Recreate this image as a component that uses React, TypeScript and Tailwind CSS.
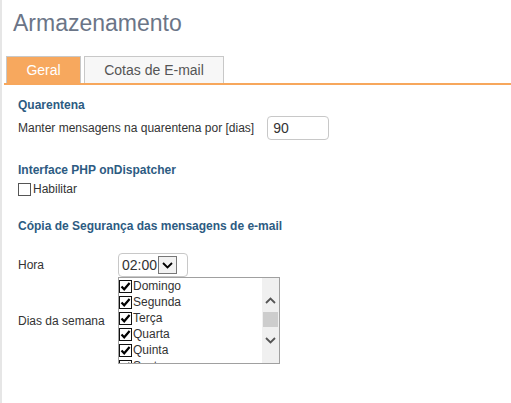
const days = ["Domingo", "Segunda", "Terça", "Quarta", "Quinta", "Sexta", "Sábado"];

function CheckMark() {
  return (
    <svg width="11" height="11" viewBox="0 0 11 11" className="block">
      <path d="M1.5 5.5 L4.2 8.3 L9.6 2" fill="none" stroke="#000" strokeWidth="2.2" />
    </svg>
  );
}

function DayList() {
  return (
    <div className="flex h-[87px] w-[162px] overflow-hidden border border-[#a0a0a0] bg-white">
      <div className="flex-1 overflow-hidden">
        {days.map((d) => (
          <div key={d} className="flex h-4 items-center text-[12px] leading-4 text-[#333]">
            <span className="flex h-[13px] w-[13px] items-center justify-center border border-[#111] bg-white">
              <CheckMark />
            </span>
            <span className="ml-px">{d}</span>
          </div>
        ))}
      </div>
      <div className="flex w-[17px] flex-col items-center bg-[#f0f0f0] pt-[19px]">
        <svg width="11" height="7" viewBox="0 0 11 7" className="block">
          <path d="M1 6 L5.5 1.5 L10 6" fill="none" stroke="#555" strokeWidth="1.8" />
        </svg>
        <div className="mt-[8px] h-[15px] w-[15px] bg-[#cdcdcd]" />
        <svg width="11" height="7" viewBox="0 0 11 7" className="mt-[10px] block">
          <path d="M1 1 L5.5 5.5 L10 1" fill="none" stroke="#555" strokeWidth="1.8" />
        </svg>
      </div>
    </div>
  );
}

export default function App() {
  return (
    <div className="min-h-[403px] border-l-2 border-[#e6e6e6] bg-white font-['Liberation_Sans',Arial,sans-serif]">
      <h1 className="pl-[11px] pt-[8px] text-[23px] leading-[30px] font-normal text-[#6b7587]">
        Armazenamento
      </h1>
      <div className="ml-[2px] mt-[18px] flex gap-[3px] border-b-2 border-[#f7a75c] pl-[2px]">
        <div className="flex h-[27px] w-[75px] items-center justify-center border border-b-0 border-[#c8c8c8] bg-[#f7a85e] text-[14px] text-white">
          Geral
        </div>
        <div className="flex h-[27px] w-[140px] items-center justify-center border border-b-0 border-[#c8c8c8] bg-[#f7f7f7] text-[14px] text-[#555]">
          Cotas de E-mail
        </div>
      </div>

      <div className="pl-4 pt-[13px] text-[12px] text-[#333]">
        <div className="font-bold leading-[15px] text-[#2d5b82]">Quarentena</div>
        <div className="mt-[3px] flex items-center">
          <span>Manter mensagens na quarentena por [dias]</span>
          <div className="ml-[13px] flex h-6 w-[62px] items-center rounded-[4px] border border-[#c8c8c8] pl-[5px] text-[14px] text-[#333]">
            90
          </div>
        </div>

        <div className="mt-[23px] font-bold leading-[15px] text-[#2d5b82]">Interface PHP onDispatcher</div>
        <label className="mt-[2px] flex items-center">
          <span className="h-[13px] w-[13px] border border-[#555] bg-white" />
          <span className="ml-[2px]">Habilitar</span>
        </label>

        <div className="mt-[21px] font-bold leading-[15px] text-[#2d5b82]">
          Cópia de Segurança das mensagens de e-mail
        </div>

        <div className="mt-[19px] flex items-center">
          <span className="w-[100px]">Hora</span>
          <div className="flex h-6 w-[70px] items-center rounded-[4px] border border-[#c8c8c8] pl-[3px]">
            <span className="text-[14px] text-[#333]">02:00</span>
            <span className="ml-[1px] flex h-[18px] w-[19px] items-center justify-center border border-[#777] bg-[#f2f2f2]">
              <svg width="11" height="7" viewBox="0 0 11 7">
                <path d="M1 1 L5.5 5.5 L10 1" fill="none" stroke="#000" strokeWidth="1.8" />
              </svg>
            </span>
          </div>
        </div>

        <div className="mt-0 flex items-center">
          <span className="w-[100px]">Dias da semana</span>
          <DayList />
        </div>
      </div>
    </div>
  );
}
